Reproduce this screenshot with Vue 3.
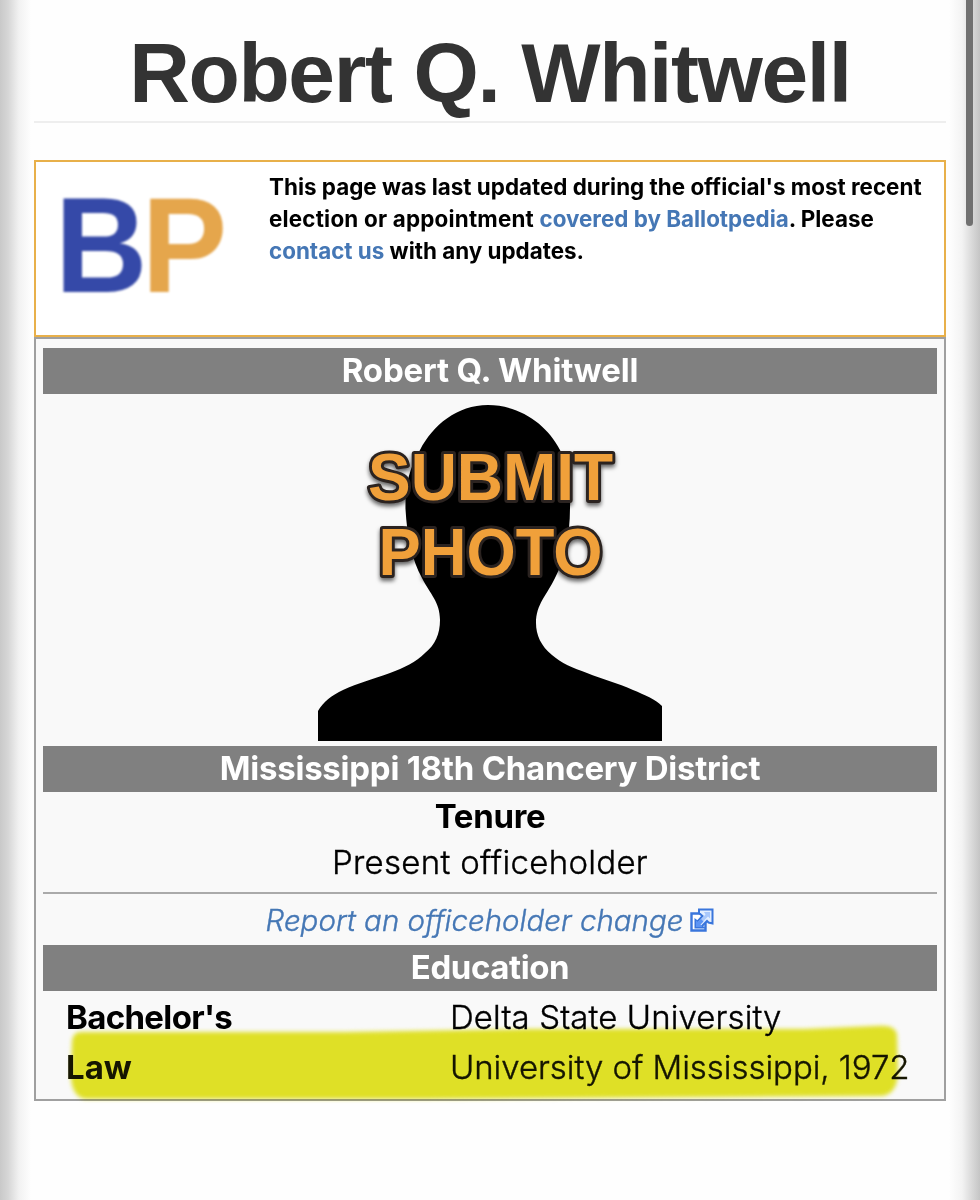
<template>
    <div class="page">
        <div class="scrollbar"></div>
        <h1 class="title"><span>Robert Q. Whitwell</span></h1>

        <div class="notice">
            <svg class="logo" width="184" height="154" viewBox="0 0 184 154">
                <text x="-1" y="123" textLength="172" lengthAdjust="spacingAndGlyphs"><tspan fill="#3549a8">B</tspan><tspan fill="#e5a64c" dx="-6">P</tspan></text>
            </svg>
            <div class="notice-text">
                <div>This page was last updated during the official's most recent</div>
                <div><span class="wider">election or appointment </span><a>covered by Ballotpedia</a>. Please</div>
                <div><a>contact us</a> with any updates.</div>
            </div>
        </div>

        <div class="infobox">
            <div class="bar name">Robert Q. Whitwell</div>
            <svg class="photo" width="344" height="344" viewBox="0 0 344 344">
                <path d="M170 8C139 8 115 28 102 53C91 72 87 89 87.500 112C89 139 94 163 104 181C112 197 122 205 122 223C122 237 117 248 107 256C98 265 86 271 72 276C55 282 40 286 25 293C14 298 5 305 0 314V344H344V309C337 302 327 298 315 293C300 286 284 282 269 276C255 271 243 266 234 258C223 249 218 238 218 226C218 207 229 198 237 181C247 162 252 139 252 110C253 86 250 70 242 53C229 27 201 8 170 8Z" />
                <g class="photo-label">
                    <text x="50" y="103" textLength="245" lengthAdjust="spacingAndGlyphs">SUBMIT</text>
                    <text x="60.5" y="177.500" textLength="224" lengthAdjust="spacingAndGlyphs">PHOTO</text>
                </g>
            </svg>
            <div class="bar district">Mississippi 18th Chancery District</div>
            <div class="tenure">
                <b>Tenure</b>
                <span>Present officeholder</span>
            </div>
            <div class="report">
                <a>Report an officeholder change</a>
                <svg width="24" height="24" viewBox="0 0 24 24">
                    <path d="M1.500 5.500H15.500V22.500H1.500Z" fill="#fff" stroke="#3a76dc" stroke-width="2.400" />
                    <path d="M9 1.500H22.500V15.500L18.500 14.500L17 13L12 18L13.500 19.500H5.500V12L7.500 13.500L12.500 8L9 5Z" fill="#e4efff" stroke="#3a76dc" stroke-width="2" />
                    <path d="M14 4H20V10.500L18 8.500L10 16.500L7.500 15L15.500 6.500Z" fill="#a9c8fb" />
                    <path d="M6 12.500L8 14L11 11L13.500 13.500L10.500 16.500L12.500 19H6Z" fill="#5c94f4" />
                </svg>
            </div>
            <div class="bar education">Education</div>
            <div class="rows">
                <div class="row" v-for="row in rows" :key="row.key" :class="row.key">
                    <b>{{ row.label }}</b>
                    <span>{{ row.value }}</span>
                </div>
                <svg class="marker" width="840" height="84" viewBox="0 0 840 84">
                    <path d="M7 20Q8 11 16 11L280 11L460 8L740 8L810 5Q831 3 832 14L833 52Q832 73 817 75L360 78L20 78Q8 76 6 58Z" />
                </svg>
            </div>
        </div>
    </div>
</template>

<script setup>
const rows = [
    { key: 'bachelor', label: "Bachelor's", value: 'Delta State University' },
    { key: 'law', label: 'Law', value: 'University of Mississippi, 1972' },
];
</script>

<style>
body {
    background: #fefefe;
}
</style>

<style scoped>
.page {
    position: relative;
    box-sizing: border-box;
    height: 1200px;
    padding: 0 34px;
    overflow: hidden;
    font-family: Inter, "Liberation Sans", sans-serif;
    font-size: 33px;
    font-weight: 300;
    color: #000;
    white-space: nowrap;
    background:
        linear-gradient(to right, #c9c9c9, #d6d6d6 8px, #f2f2f2 19px, #fefefe 31px, transparent 32px),
        linear-gradient(to left, #c5c5c5, #d9d9d9 8px, #f3f3f3 18px, #fefefe 31px, transparent 32px),
        #fefefe;
}

.scrollbar {
    position: absolute;
    top: 0;
    right: 7px;
    width: 7px;
    height: 226px;
    border-radius: 0 0 4px 4px;
    background: #707070;
}

.title {
    box-sizing: border-box;
    height: 123px;
    margin: 0 0 37px;
    padding-top: 26px;
    border-bottom: 2px solid #eee;
    font: bold 84px/94px "Liberation Sans", sans-serif;
    letter-spacing: -1.4px;
    text-align: center;
    color: #333;
}

a {
    color: #4577b5;
}

b {
    font-weight: 700;
}

.notice {
    box-sizing: border-box;
    display: flex;
    height: 177px;
    padding: 9px 0 0 20px;
    border: 2px solid #e8b04a;
    background: #fff;
}

.logo {
    margin-top: -2px;
    font: bold 135px "Liberation Sans", sans-serif;
    filter: blur(1.3px);
}

.notice-text {
    margin-left: 29px;
    font-size: 22.4px;
    font-weight: 700;
    line-height: 32px;
}

.wider {
    letter-spacing: 0.2px;
}

.infobox {
    box-sizing: border-box;
    height: 764px;
    padding: 9px 7px 0;
    border: 2px solid #a0a0a0;
    background: #f9f9f9;
}

.bar {
    height: 46px;
    line-height: 45px;
    font-weight: 700;
    text-align: center;
    color: #fff;
    background: #808080;
}

.name {
    letter-spacing: -0.17px;
}

.district {
    letter-spacing: -0.25px;
}

.education {
    letter-spacing: -0.4px;
}

.photo {
    display: block;
    margin: 3px auto 5px;
}

.photo-label {
    font: bold 66px "Liberation Sans", sans-serif;
    fill: #f0a03a;
    stroke: #2b2320;
    stroke-width: 6px;
    stroke-linejoin: round;
    paint-order: stroke;
    filter: drop-shadow(0 3px 2px rgba(0, 0, 0, 0.6)) blur(0.5px);
}

.tenure {
    box-sizing: border-box;
    display: flex;
    flex-direction: column;
    align-items: center;
    height: 102px;
    padding-top: 2px;
    border-bottom: 2px solid #aaa;
    line-height: 45.5px;
}

.tenure b {
    letter-spacing: -0.3px;
}

.tenure span {
    letter-spacing: 0.3px;
}

/* the light weight alone is a little too thin */
.tenure span,
.report a,
.row span {
    -webkit-text-stroke: 0.4px currentColor;
}

.report {
    display: flex;
    align-items: center;
    justify-content: center;
    gap: 7px;
    height: 51px;
    font-size: 29.5px;
    font-style: italic;
}

.rows {
    position: relative;
    padding: 1px 0 0 23px;
}

.row {
    display: grid;
    grid-template-columns: 384px 1fr;
    height: 50px;
    line-height: 50px;
}

.bachelor b {
    letter-spacing: -0.65px;
}

.bachelor span {
    letter-spacing: 0.1px;
}

.law {
    color: #171700;
}

.law span {
    letter-spacing: -0.05px;
}

.marker {
    position: absolute;
    left: 22px;
    top: 30px;
    fill: #e5e627;
    mix-blend-mode: multiply;
    filter: blur(2px);
}
</style>
